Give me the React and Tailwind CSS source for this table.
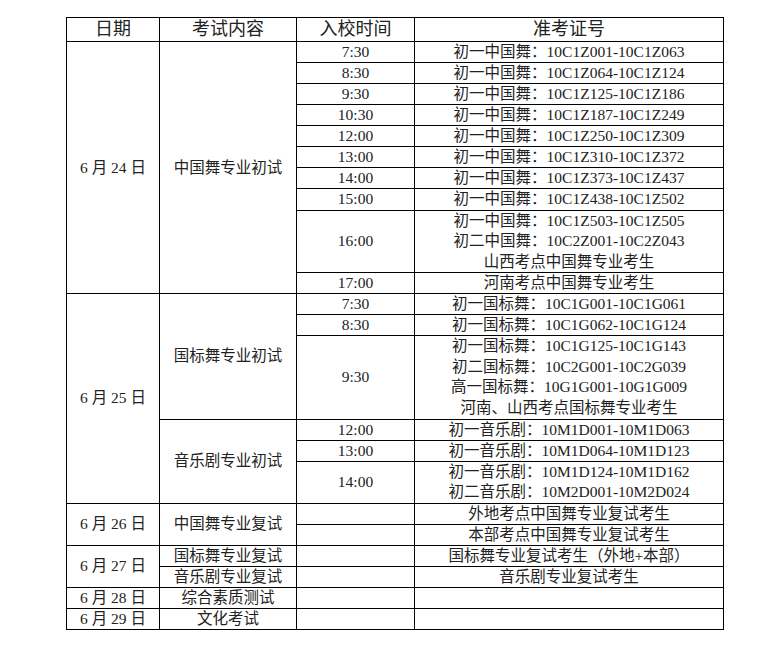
import React from 'react';

// one line per entry; multi-line cells get several
const rows = [
  { date: '6 月 24 日', dateSpan: 10, subject: '中国舞专业初试', subjectSpan: 10, time: '7:30', ids: ['初一中国舞：10C1Z001-10C1Z063'] },
  { time: '8:30', ids: ['初一中国舞：10C1Z064-10C1Z124'] },
  { time: '9:30', ids: ['初一中国舞：10C1Z125-10C1Z186'] },
  { time: '10:30', ids: ['初一中国舞：10C1Z187-10C1Z249'] },
  { time: '12:00', ids: ['初一中国舞：10C1Z250-10C1Z309'] },
  { time: '13:00', ids: ['初一中国舞：10C1Z310-10C1Z372'] },
  { time: '14:00', ids: ['初一中国舞：10C1Z373-10C1Z437'] },
  { time: '15:00', ids: ['初一中国舞：10C1Z438-10C1Z502'] },
  { time: '16:00', ids: ['初一中国舞：10C1Z503-10C1Z505', '初二中国舞：10C2Z001-10C2Z043', '山西考点中国舞专业考生'] },
  { time: '17:00', ids: ['河南考点中国舞专业考生'] },
  { date: '6 月 25 日', dateSpan: 6, subject: '国标舞专业初试', subjectSpan: 3, time: '7:30', ids: ['初一国标舞：10C1G001-10C1G061'] },
  { time: '8:30', ids: ['初一国标舞：10C1G062-10C1G124'] },
  { time: '9:30', ids: ['初一国标舞：10C1G125-10C1G143', '初二国标舞：10C2G001-10C2G039', '高一国标舞：10G1G001-10G1G009', '河南、山西考点国标舞专业考生'] },
  { subject: '音乐剧专业初试', subjectSpan: 3, time: '12:00', ids: ['初一音乐剧：10M1D001-10M1D063'] },
  { time: '13:00', ids: ['初一音乐剧：10M1D064-10M1D123'] },
  { time: '14:00', ids: ['初一音乐剧：10M1D124-10M1D162', '初二音乐剧：10M2D001-10M2D024'] },
  { date: '6 月 26 日', dateSpan: 2, subject: '中国舞专业复试', subjectSpan: 2, time: '', ids: ['外地考点中国舞专业复试考生'] },
  { time: '', ids: ['本部考点中国舞专业复试考生'] },
  { date: '6 月 27 日', dateSpan: 2, subject: '国标舞专业复试', subjectSpan: 1, time: '', ids: ['国标舞专业复试考生（外地+本部）'] },
  { subject: '音乐剧专业复试', subjectSpan: 1, time: '', ids: ['音乐剧专业复试考生'] },
  { date: '6 月 28 日', dateSpan: 1, subject: '综合素质测试', subjectSpan: 1, time: '', ids: [''] },
  { date: '6 月 29 日', dateSpan: 1, subject: '文化考试', subjectSpan: 1, time: '', ids: [''] },
];

const cell = 'border border-black p-0 text-center align-middle whitespace-nowrap';

export default function App() {
  return (
    <div className="min-h-[650px] bg-white pt-[17px] pl-[66px] font-['Liberation_Serif','Noto_Sans_CJK_SC',serif] text-[#222]">
      <table className="table-fixed border-collapse border border-black w-[657px]">
        <colgroup>
          <col className="w-[93px]" />
          <col className="w-[137px]" />
          <col className="w-[118px]" />
          <col className="w-[309px]" />
        </colgroup>
        <thead>
          <tr className="text-[18px] leading-[23px]">
            <th className={`${cell} font-normal`}>日期</th>
            <th className={`${cell} font-normal`}>考试内容</th>
            <th className={`${cell} font-normal`}>入校时间</th>
            <th className={`${cell} font-normal`}>准考证号</th>
          </tr>
        </thead>
        <tbody className="text-[15.5px]">
          {rows.map((r, i) => {
            const multi = r.ids.length > 1;
            return (
              <tr key={i} className={multi ? 'leading-[20.55px]' : 'leading-[20.06px]'}>
                {r.date && (
                  <td rowSpan={r.dateSpan} className={`${cell} leading-[20px]`}>{r.date}</td>
                )}
                {r.subject && (
                  <td rowSpan={r.subjectSpan} className={`${cell} leading-[20px]`}>{r.subject}</td>
                )}
                <td className={cell}>{r.time}</td>
                <td className={cell}>
                  {r.ids.map((line, j) => (
                    <div key={j}>{line || '\u00a0'}</div>
                  ))}
                </td>
              </tr>
            );
          })}
        </tbody>
      </table>
    </div>
  );
}
